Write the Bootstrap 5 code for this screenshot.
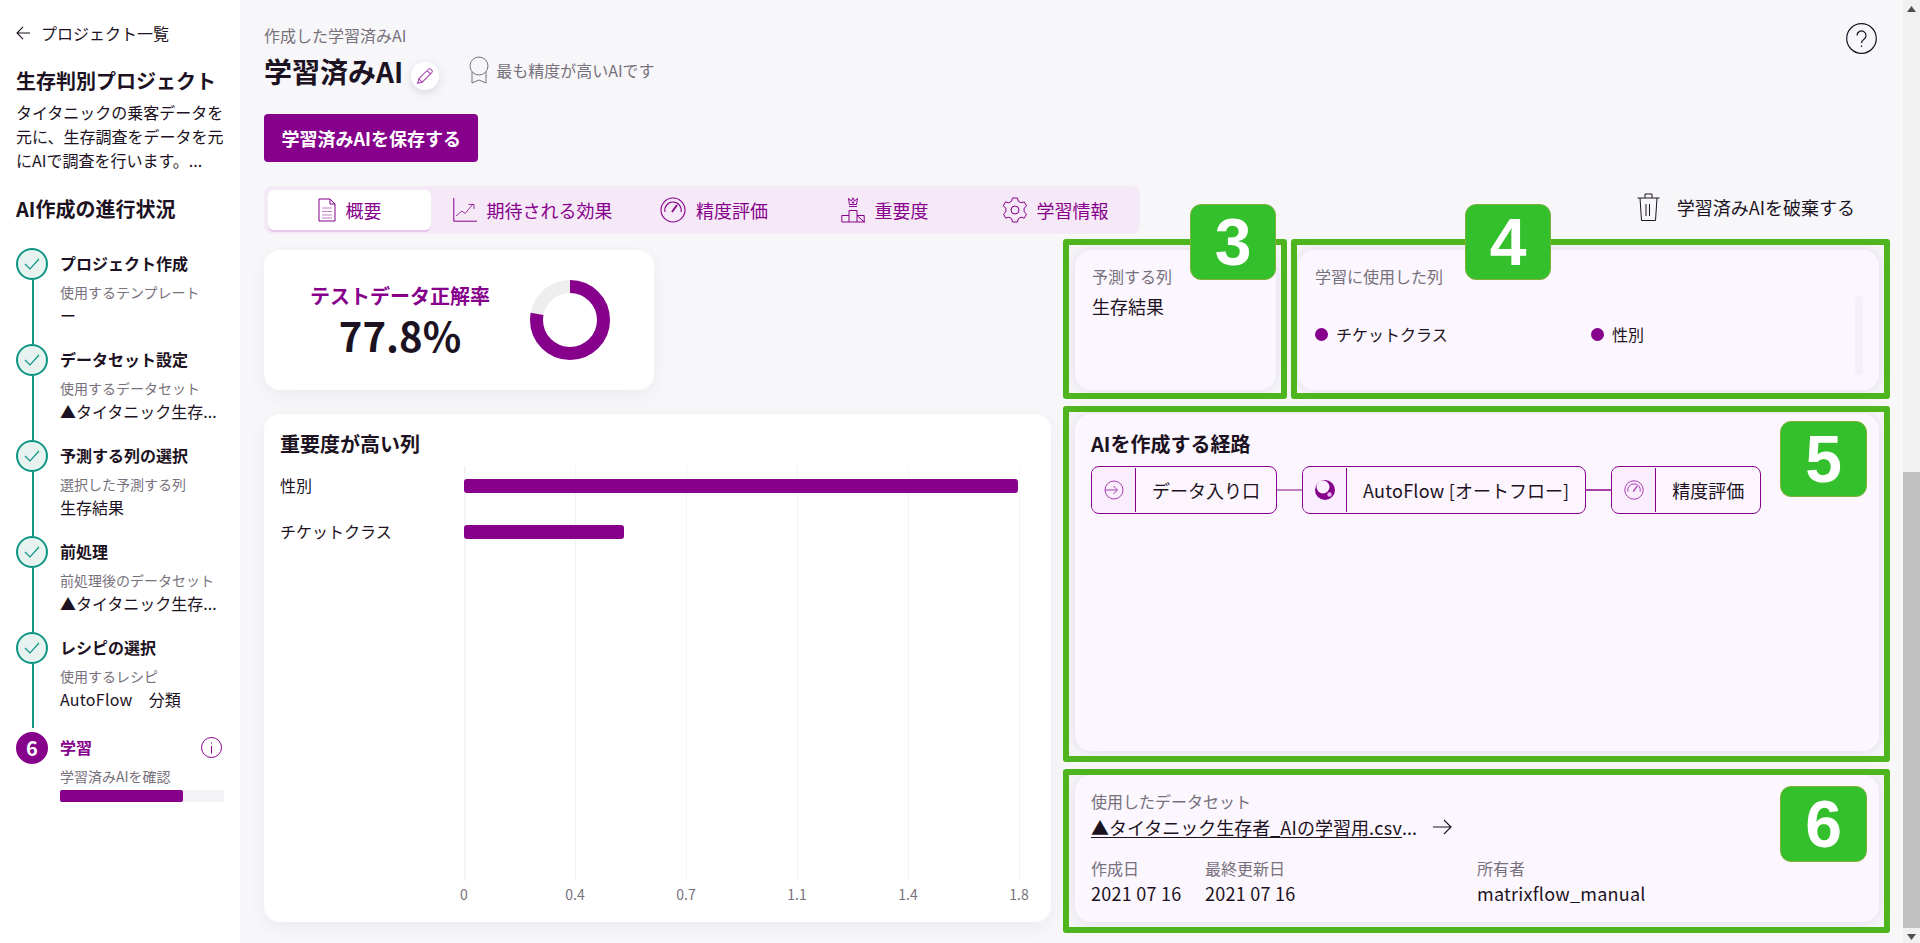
<!DOCTYPE html>
<html lang="ja">
<head>
<meta charset="utf-8">
<title>学習済みAI</title>
<link href="https://cdn.jsdelivr.net/npm/bootstrap@5.3.0/dist/css/bootstrap.min.css" rel="stylesheet">
<style>
html,body{height:943px;overflow:hidden}
body{font-family:"Noto Sans CJK JP","Noto Sans",sans-serif;color:#1c1222;background:#f7f7fa;font-size:16px;line-height:24px}
svg{display:block;flex:none}
.app{height:943px}
.wide{letter-spacing:.25px}
.side{width:240px;flex:none;background:#fff;padding:21px 16px 0}
.back{height:24px;gap:11px}
.ptitle{font-size:20px;font-weight:700;line-height:30px;margin-top:21px}
.pdesc{line-height:24px;margin-top:4px;width:208px}
.phead{font-size:20px;font-weight:700;line-height:30px;margin-top:22px;margin-bottom:24px}
.step{height:96px;gap:12px}
.rail{width:32px;flex:none}
.dot{width:32px;height:32px;border-radius:50%;border:2px solid #0e9683;background:#e6f3f1;flex:none}
.dot-on{background:#86008c;border-color:#86008c;color:#fff;font-weight:700;font-size:20px}
.wire{width:2px;background:#0e9683;flex:1;margin-left:2px}
.stxt{padding-top:3px;width:164px}
.stitle{font-weight:700;line-height:24px}
.ssub{font-size:14px;line-height:20px;margin-top:7px;color:#77717c}
.sval{line-height:24px;margin-top:1px;white-space:nowrap}
.laststep{margin-top:4px;height:auto}
.pur{color:#86008c}
.prog{height:12px;background:#f4f4f8;border-radius:2px;margin-top:4px}
.progfill{height:100%;background:#86008c;border-radius:2px}
.mainp{flex:1;min-width:0;padding:23px 24px 0;background:#f7f7fa}
.grey{color:#77717c}
.pagetitle{font-size:28px;font-weight:700;line-height:40px;margin:0}
.edit{width:28px;height:28px;border-radius:50%;background:#fff;box-shadow:0 3px 10px rgba(60,30,80,.14);margin-top:11px;margin-left:8px}
.best{margin-left:28px;gap:5px;height:37px}
.savebtn{margin-top:23px;height:48px;padding:0 17.500px;border:0;border-radius:4px;background:#86008c;color:#fff;font-size:18px;font-weight:700;display:block}
.savebtn:hover{background:#86008c;color:#fff}
.tabsrow{margin-top:24px;height:48px}
.tabsbar{width:876px;height:48px;padding:4px;background:#f6e9f7;border-radius:8px;display:grid;grid-template-columns:163px 203px 160px 181px 161px}
.tabitem{gap:10px;color:#86008c;font-size:18px;height:40px;white-space:nowrap}
.tabon{background:#fff;border-radius:6px;box-shadow:0 2px 0 #e6c8ea}
.trash{margin-left:auto;margin-right:24px;margin-bottom:6px;gap:17px;font-size:18px}
.board{margin-top:16px;height:672px;display:grid;grid-template-columns:787px minmax(0,1fr);gap:24px}
.whitecard{background:#fff;border-radius:16px;box-shadow:0 6px 18px rgba(60,40,90,.06)}
.acc{width:390px;height:140px;padding-left:46px;gap:40px;flex:none}
.acct{font-size:20px;font-weight:700;line-height:30px;color:#86008c;white-space:nowrap}
.accv{font-size:40px;font-weight:700;line-height:48px}
.chart{flex:1;padding:16px 16px 0;position:relative}
.ctitle{font-size:20px;font-weight:700;line-height:28px}
.plot{margin-top:8px;margin-left:184px;width:557px;height:415px;background:repeating-linear-gradient(90deg,#f4f4f6 0,#f4f4f6 1.5px,transparent 1.5px,transparent 111px);padding-top:13px;margin-bottom:2px}
.crow{height:14px;margin-bottom:32px;position:relative}
.clabel{position:absolute;right:100%;width:184px;top:-6px;line-height:24px;white-space:nowrap}
.cbar{height:14px;background:#86008c;border-radius:3px}
.ticks{margin-left:164px;width:595px;margin-top:3px;font-size:14px;color:#77717c;display:flex;justify-content:space-between;line-height:20px}
.ticks span{width:40px;text-align:center}
.rcol{gap:24px;min-width:0}
.tint{background:#fcf6fe;border-radius:16px;box-shadow:0 0 14px rgba(90,60,130,.14);position:relative}
.toprow{height:140px;display:grid;grid-template-columns:201px minmax(0,1fr);gap:22px;flex:none}
.pad{padding:14px 17px}
.big18{font-size:18px;line-height:28px}
.bul{width:13px;height:13px;border-radius:50%;background:#86008c;flex:none}
.cols{margin-top:34px;width:540px}
.colitem{flex:0 0 276px;gap:8px;white-space:nowrap}
.sb4{position:absolute;left:557px;top:46px;width:8px;height:79px;background:#f5eff8;border-radius:4px}
.flow{flex:1;padding:16px}
.nodes{margin-top:8px}
.node{height:48px;border:1px solid #86008c;border-radius:8px;background:#fcf5fe;overflow:hidden;font-size:18px;white-space:nowrap}
.nicon{width:44px;height:44px;margin:1px 0;background:#faeefe;border-right:1px solid #86008c;flex:none}
.ntxt{padding:0 16px;line-height:46px}
.conn{width:25px;height:2px;flex:none}
.c1{background:#c27fc6}
.c2{background:#a840ae}
.ds{height:147px;flex:none;padding:14px 16px 0}
.dslink{font-size:18px;line-height:28px;margin-top:0;gap:16px}
.dslink u{text-underline-offset:2px}
.meta{margin-top:15px}
.meta .big18{line-height:27px}
.mc1{width:114px}.mc2{width:272px}
.frame{position:absolute;border:6px solid #4fb51f;border-radius:3px;pointer-events:none}
.f3{left:-12px;right:-11px;top:-11px;bottom:-9px}
.f4{left:-7px;right:-11px;top:-11px;bottom:-9px}
.f5{left:-12px;right:-11px;top:-8px;bottom:-11px}
.f6{left:-12px;right:-11px;top:-6px;bottom:-11px}
.tag{position:absolute;width:86px;height:76px;background:#34c02c;border:1px solid #7fb03a;border-radius:11px;color:#fff;font-family:"Liberation Sans",sans-serif;font-weight:700;font-size:66px;line-height:74px;text-align:center}
.t3{left:115px;top:-46px}
.t4{left:167px;top:-46px}
.t5{left:705px;top:7px;width:87px}
.t6{left:705px;top:11px;width:87px}
.fakebar{width:17px;flex:none;background:#f1f1f1}
.sbtn{height:17px}
.sthumb{height:456px;margin-top:455px;background:#c1c1c1}
</style>
</head>
<body>
<div class="app d-flex">
  <aside class="side">
    <div class="back d-flex align-items-center">
      <svg width="14" height="14" viewBox="0 0 14 14" fill="none" stroke="#1c1222" stroke-width="1.100"><path d="M14 7H1M7 .8 1 7l6 6.200"/></svg>
      <span>プロジェクト一覧</span>
    </div>
    <div class="ptitle">生存判別プロジェクト</div>
    <div class="pdesc">タイタニックの乗客データを元に、生存調査をデータを元にAIで調査を行います。...</div>
    <div class="phead">AI作成の進行状況</div>

    <div class="step d-flex">
      <div class="rail d-flex flex-column align-items-center">
        <div class="dot d-flex align-items-center justify-content-center"><svg width="16" height="12" viewBox="0 0 16 12" fill="none" stroke="#0e9683" stroke-width="1.200"><path d="M1 6l5 5L15 1"/></svg></div>
        <div class="wire"></div>
      </div>
      <div class="stxt"><div class="stitle">プロジェクト作成</div><div class="ssub">使用するテンプレート</div><div class="sval">ー</div></div>
    </div>
    <div class="step d-flex">
      <div class="rail d-flex flex-column align-items-center">
        <div class="dot d-flex align-items-center justify-content-center"><svg width="16" height="12" viewBox="0 0 16 12" fill="none" stroke="#0e9683" stroke-width="1.200"><path d="M1 6l5 5L15 1"/></svg></div>
        <div class="wire"></div>
      </div>
      <div class="stxt"><div class="stitle">データセット設定</div><div class="ssub">使用するデータセット</div><div class="sval">▲タイタニック生存...</div></div>
    </div>
    <div class="step d-flex">
      <div class="rail d-flex flex-column align-items-center">
        <div class="dot d-flex align-items-center justify-content-center"><svg width="16" height="12" viewBox="0 0 16 12" fill="none" stroke="#0e9683" stroke-width="1.200"><path d="M1 6l5 5L15 1"/></svg></div>
        <div class="wire"></div>
      </div>
      <div class="stxt"><div class="stitle">予測する列の選択</div><div class="ssub">選択した予測する列</div><div class="sval">生存結果</div></div>
    </div>
    <div class="step d-flex">
      <div class="rail d-flex flex-column align-items-center">
        <div class="dot d-flex align-items-center justify-content-center"><svg width="16" height="12" viewBox="0 0 16 12" fill="none" stroke="#0e9683" stroke-width="1.200"><path d="M1 6l5 5L15 1"/></svg></div>
        <div class="wire"></div>
      </div>
      <div class="stxt"><div class="stitle">前処理</div><div class="ssub">前処理後のデータセット</div><div class="sval">▲タイタニック生存...</div></div>
    </div>
    <div class="step d-flex">
      <div class="rail d-flex flex-column align-items-center">
        <div class="dot d-flex align-items-center justify-content-center"><svg width="16" height="12" viewBox="0 0 16 12" fill="none" stroke="#0e9683" stroke-width="1.200"><path d="M1 6l5 5L15 1"/></svg></div>
        <div class="wire"></div>
      </div>
      <div class="stxt"><div class="stitle">レシピの選択</div><div class="ssub">使用するレシピ</div><div class="sval"><span class="wide">AutoFlow</span>　分類</div></div>
    </div>
    <div class="step laststep d-flex">
      <div class="rail"><div class="dot dot-on d-flex align-items-center justify-content-center">6</div></div>
      <div class="stxt">
        <div class="d-flex justify-content-between align-items-center">
          <div class="stitle pur">学習</div>
          <svg width="23" height="21" viewBox="0 0 23 21" fill="none" stroke="#86008c" stroke-width="1"><circle cx="10.500" cy="10.500" r="10"/><path d="M10.500 9v7.500M10.500 5.500v1.200"/></svg>
        </div>
        <div class="ssub">学習済みAIを確認</div>
        <div class="prog"><div class="progfill" style="width:75%"></div></div>
      </div>
    </div>
  </aside>

  <main class="mainp">
    <div class="d-flex justify-content-between">
      <div>
        <div class="grey">作成した学習済みAI</div>
        <div class="d-flex mt-1">
          <h1 class="pagetitle">学習済みAI</h1>
          <div class="edit d-flex align-items-center justify-content-center">
            <svg width="18" height="18" viewBox="0 0 16 16" fill="none" stroke="#a93db0" stroke-width=".9"><path d="M1.500 14.500l1-4L11 2a1.600 1.600 0 0 1 2.200 0l.8.8a1.600 1.600 0 0 1 0 2.200L5.500 13.500zM2.500 10.500l3 3M9.800 3.200l3 3"/></svg>
          </div>
          <div class="best d-flex align-items-center grey">
            <svg width="24" height="28" viewBox="0 0 24 28" fill="none" stroke="#77717c" stroke-width="1"><circle cx="12" cy="10" r="9"/><path d="M5 16v11l7-3 7 3V16"/></svg>
            <span>最も精度が高いAIです</span>
          </div>
        </div>
      </div>
      <svg width="33" height="31" viewBox="0 0 33 31" fill="none" stroke="#1c1222" stroke-width="1.200"><circle cx="15.500" cy="15.500" r="14.800"/><path d="M11 12.500a4.500 4.500 0 1 1 7 3.700c-1.600 1.100-2.500 1.800-2.500 3.800M15.500 22.500v1.500"/></svg>
    </div>
    <button class="btn savebtn" type="button">学習済みAIを保存する</button>

    <div class="tabsrow d-flex align-items-center">
      <nav class="tabsbar">
        <div class="tabitem tabon d-flex align-items-center justify-content-center">
          <svg width="18" height="24" viewBox="0 0 18 24" fill="none" stroke="#86008c" stroke-width="1"><path d="M1 1h11l5 5v17H1zM12 1v5h5"/><path stroke="#c77fcb" d="M4 10h10M4 13.500h10M4 17h10M4 20h10"/></svg>
          <span>概要</span>
        </div>
        <div class="tabitem d-flex align-items-center justify-content-center">
          <svg width="24" height="24" viewBox="0 0 24 24" fill="none" stroke="#86008c" stroke-width="1"><path d="M.8 0v23.200H24"/><path stroke-width=".8" d="M3 18l6-5 3 2.500L20 6M15.500 6.500H21V11"/></svg>
          <span>期待される効果</span>
        </div>
        <div class="tabitem d-flex align-items-center justify-content-center">
          <svg width="26" height="26" viewBox="0 0 26 26" fill="none" stroke="#86008c" stroke-width="1.100"><circle cx="13" cy="13" r="12"/><path d="M5 15a8.200 8.200 0 1 1 16 0"/><path stroke-width="1.800" d="M12 15l5-7"/></svg>
          <span>精度評価</span>
        </div>
        <div class="tabitem d-flex align-items-center justify-content-center">
          <svg width="24" height="26" viewBox="0 0 24 26" fill="none" stroke="#86008c" stroke-width="1"><path d="M.8 25V18.500H8M8 25V13.500h8V25M16 18.500h7.200V25zM.8 25h23"/><path d="M8 9.500h8M8.500 7.500 7.500 1.500l3 2.500L12 .8 13.500 4l3-2.500-1 6z"/><circle cx="12" cy="5.500" r=".7" fill="#86008c"/></svg>
          <span>重要度</span>
        </div>
        <div class="tabitem d-flex align-items-center justify-content-center">
          <svg width="24" height="26" viewBox="0 0 24 26" fill="none" stroke="#86008c" stroke-width="1"><path d="M9.500 1h5l.8 3.200 2.800 1.600 3.200-.9 2.200 4-2.400 2.300v3.600l2.400 2.300-2.200 4-3.200-.9-2.800 1.600-.8 3.200h-5l-.8-3.200-2.800-1.600-3.200.9-2.200-4 2.400-2.300v-3.600L.3 8.900l2.200-4 3.200.9 2.800-1.600z"/><circle cx="12" cy="13" r="4"/></svg>
          <span>学習情報</span>
        </div>
      </nav>
      <div class="trash d-flex align-items-center">
        <svg width="23" height="28" viewBox="0 0 23 28" fill="none" stroke="#1c1222" stroke-width="1"><path d="M.5 5h22M8 5V1h7v4M3 5l1.500 22.500h14L20 5M9 11v12M12.500 11v12"/></svg>
        <span>学習済みAIを破棄する</span>
      </div>
    </div>

    <div class="board">
      <div class="d-flex flex-column gap-4">
        <section class="whitecard acc d-flex align-items-center">
          <div class="text-center">
            <div class="acct">テストデータ正解率</div>
            <div class="accv">77.8%</div>
          </div>
          <svg width="80" height="80" viewBox="0 0 80 80" fill="none" stroke-width="13"><circle cx="40" cy="40" r="33.500" stroke="#eeeeee"/><circle cx="40" cy="40" r="33.500" stroke="#86008c" stroke-dasharray="163.800 210.500" transform="rotate(-90 40 40)"/></svg>
        </section>
        <section class="whitecard chart">
          <div class="ctitle">重要度が高い列</div>
          <div class="plot">
            <div class="crow"><div class="clabel">性別</div><div class="cbar" style="width:99.400%"></div></div>
            <div class="crow"><div class="clabel">チケットクラス</div><div class="cbar" style="width:28.700%"></div></div>
          </div>
          <div class="ticks"><span>0</span><span>0.4</span><span>0.7</span><span>1.1</span><span>1.4</span><span>1.8</span></div>
        </section>
      </div>

      <div class="rcol d-flex flex-column">
        <div class="toprow">
          <section class="tint pad">
            <div class="grey">予測する列</div>
            <div class="big18 mt-1">生存結果</div>
            <div class="frame f3"></div>
            <div class="tag t3">3</div>
          </section>
          <section class="tint pad">
            <div class="grey">学習に使用した列</div>
            <div class="cols d-flex">
              <div class="colitem d-flex align-items-center"><span class="bul"></span>チケットクラス</div>
              <div class="colitem d-flex align-items-center"><span class="bul"></span>性別</div>
            </div>
            <div class="sb4"></div>
            <div class="frame f4"></div>
            <div class="tag t4">4</div>
          </section>
        </div>
        <section class="tint flow">
          <div class="ctitle">AIを作成する経路</div>
          <div class="nodes d-flex align-items-center">
            <div class="node d-flex">
              <div class="nicon d-flex align-items-center justify-content-center"><svg width="20" height="20" viewBox="0 0 20 20" fill="none" stroke="#a93db0" stroke-width="1"><circle cx="10" cy="10" r="9"/><path d="M1 10h12M9.500 6l4 4-4 4"/></svg></div>
              <div class="ntxt">データ入り口</div>
            </div>
            <div class="conn c1"></div>
            <div class="node d-flex">
              <div class="nicon d-flex align-items-center justify-content-center"><svg width="20" height="20" viewBox="0 0 20 20"><circle cx="10" cy="10" r="10" fill="#86008c"/><circle cx="8" cy="7" r="6.500" fill="#faeefe"/><circle cx="14.500" cy="14.500" r="2.200" fill="#e2b3e5"/></svg></div>
              <div class="ntxt"><span class="wide">AutoFlow [</span>オートフロー]</div>
            </div>
            <div class="conn c2"></div>
            <div class="node d-flex">
              <div class="nicon d-flex align-items-center justify-content-center"><svg width="20" height="20" viewBox="0 0 26 26" fill="none" stroke="#a93db0" stroke-width="1.300"><circle cx="13" cy="13" r="12"/><path d="M5 15a8.200 8.200 0 1 1 16 0"/><path stroke-width="1.800" d="M12 15l5-7"/></svg></div>
              <div class="ntxt">精度評価</div>
            </div>
          </div>
          <div class="frame f5"></div>
          <div class="tag t5">5</div>
        </section>
        <section class="tint ds">
          <div class="grey">使用したデータセット</div>
          <div class="dslink d-flex align-items-center">
            <span><u>▲タイタニック生存者_<span class="wide">AI</span>の学習用<span class="wide">.csv</span></u>...</span>
            <svg width="19" height="16" viewBox="0 0 19 16" fill="none" stroke="#1c1222" stroke-width="1.100"><path d="M0 8h18M11 1l7 7-7 7"/></svg>
          </div>
          <div class="meta d-flex">
            <div class="mc1"><div class="grey">作成日</div><div class="big18 wide">2021 07 16</div></div>
            <div class="mc2"><div class="grey">最終更新日</div><div class="big18 wide">2021 07 16</div></div>
            <div><div class="grey">所有者</div><div class="big18 wide">matrixflow_manual</div></div>
          </div>
          <div class="frame f6"></div>
          <div class="tag t6">6</div>
        </section>
      </div>
    </div>
  </main>

  <div class="fakebar">
    <div class="sbtn d-flex align-items-center justify-content-center"><svg width="9" height="6" viewBox="0 0 9 6"><path d="M4.500 0 9 6H0z" fill="#505050"/></svg></div>
    <div class="sthumb"></div>
    <div class="sbtn d-flex align-items-center justify-content-center"><svg width="9" height="6" viewBox="0 0 9 6"><path d="M0 0h9L4.500 6z" fill="#505050"/></svg></div>
  </div>
</div>
<script src="https://cdn.jsdelivr.net/npm/bootstrap@5.3.0/dist/js/bootstrap.bundle.min.js"></script>
</body>
</html>
